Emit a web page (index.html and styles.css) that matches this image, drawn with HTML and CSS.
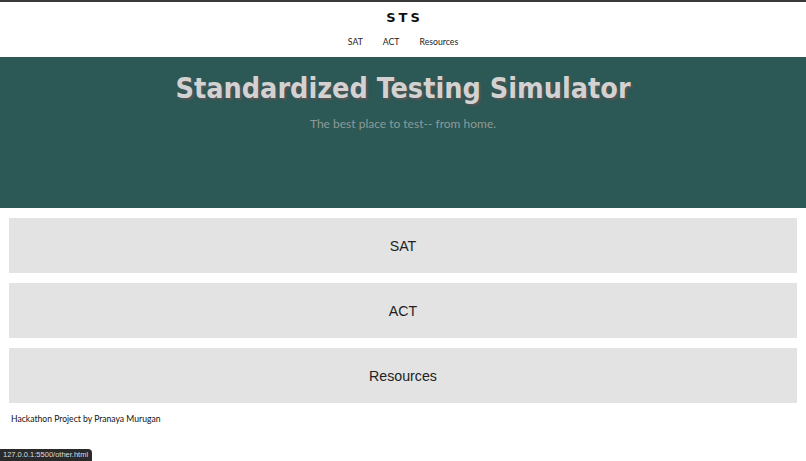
FILE: index.html
```html
<!DOCTYPE html>
<html>
<head>
<meta charset="utf-8">
<title>STS</title>
<link rel="stylesheet" href="styles.css">
</head>
<body>
<header class="top">
  <div class="logo">STS</div>
  <nav class="nav">
    <a href="#">SAT</a>
    <a href="#">ACT</a>
    <a href="#">Resources</a>
  </nav>
</header>
<section class="hero">
  <h1 class="title">Standardized Testing Simulator</h1>
  <p class="subtitle">The best place to test-- from home.</p>
</section>
<main class="cards">
  <a class="card" href="#">SAT</a>
  <a class="card" href="#">ACT</a>
  <a class="card" href="#">Resources</a>
</main>
<footer class="foot">Hackathon Project by Pranaya Murugan</footer>
<div class="status">127.0.0.1:5500/other.html</div>
</body>
</html>
```
FILE: styles.css
```css
html, body {
  margin: 0;
  padding: 0;
  background: #fff;
}
body {
  font-family: "Lato", "Open Sans", sans-serif;
  border-top: 2px solid #3a3a3a;
  height: 459px;
  position: relative;
  overflow: hidden;
}
.top {
  height: 55px;
  display: flex;
  flex-direction: column;
  align-items: center;
}
.logo {
  margin-top: 9px;
  font-family: "DejaVu Sans", sans-serif;
  font-weight: bold;
  font-size: 13px;
  letter-spacing: 3px;
  padding-left: 3px;
  color: #111;
  line-height: 14px;
}
.nav {
  margin-top: 11px;
  display: flex;
  gap: 20px;
}
.nav a {
  font-size: 8.7px;
  color: #222;
  text-decoration: none;
  line-height: 12px;
}
.hero {
  background: #2c5855;
  height: 151px;
  display: flex;
  flex-direction: column;
  align-items: center;
}
.title {
  margin: 14px 0 0;
  font-family: "DejaVu Sans", sans-serif;
  font-stretch: condensed;
  font-weight: bold;
  font-size: 28.5px;
  line-height: 36px;
  color: #d2d2d2;
  text-shadow: 2px 2px 2px #555;
}
.subtitle {
  margin: 9px 0 0;
  font-size: 12px;
  color: #8c9b99;
  line-height: 16px;
}
.cards {
  padding: 10px 9px 0;
  display: flex;
  flex-direction: column;
  gap: 10px;
}
.card {
  height: 55px;
  background: #e3e3e3;
  display: flex;
  align-items: center;
  justify-content: center;
  font-family: "Liberation Sans", sans-serif;
  font-size: 14.2px;
  color: #222;
  text-decoration: none;
}
.foot {
  margin: 10px 0 0 11px;
  font-size: 8.6px;
  color: #111;
  line-height: 12px;
}
.status {
  position: absolute;
  left: 0;
  bottom: 0;
  background: #2a2a2a;
  color: #ddd;
  font-size: 7.5px;
  line-height: 12px;
  padding: 0 4px 0 3px;
  border-top-right-radius: 4px;
  font-family: "Liberation Sans", sans-serif;
}
```
